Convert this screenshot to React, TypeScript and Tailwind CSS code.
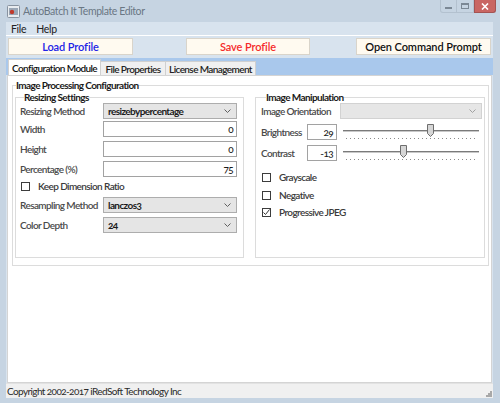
import React from 'react';
import clsx from 'clsx';

const ComboBox = ({
  value,
  width,
  disabled,
}: {
  value?: string;
  width: string;
  disabled?: boolean;
}) => (
  <div
    className={clsx(
      'h-[16px] border flex items-center justify-between pl-[4px] pr-[5px] font-bold text-[#1a1a1a]',
      disabled ? 'bg-[#e6e6e6] border-[#d2d2d2]' : 'bg-[#e5e5e5] border-[#adadad]',
      width
    )}
  >
    <span>{value}</span>
    <svg width="7" height="4" viewBox="0 0 7 4">
      <path
        d="M0.5 0.5 L3.5 3.5 L6.5 0.5"
        fill="none"
        stroke={disabled ? '#a0a0a0' : '#606060'}
        strokeWidth="1"
      />
    </svg>
  </div>
);

const TextBox = ({ value, width }: { value: string; width: string }) => (
  <div
    className={clsx(
      'h-[16px] bg-white border border-[#a2a2a2] flex items-center justify-end pr-[3px] font-medium text-[#1a1a1a]',
      width
    )}
  >
    {value}
  </div>
);

const CheckBox = ({ label, checked }: { label: string; checked?: boolean }) => (
  <div className="h-[10px] flex items-center">
    <span className="w-[9px] h-[9px] border border-[#3c3c3c] bg-white flex items-center justify-center">
      {checked && (
        <svg width="7" height="7" viewBox="0 0 7 7">
          <path d="M0.5 3.5 L2.5 5.5 L6.5 0.5" fill="none" stroke="#333" strokeWidth="1" />
        </svg>
      )}
    </span>
    <span className="ml-[8px] font-semibold text-[#3a3a3a]">{label}</span>
  </div>
);

// value from -100 to 100
const TrackBar = ({ value }: { value: number }) => {
  const pos = (value + 100) / 200;
  return (
    <div className="relative w-[136px] h-[16px] ml-[6px]">
      <div className="mt-[6px] h-[2px] bg-[#7a7a7a] border-b border-[#c8c8c8]" />
      <div className="mt-[6px] mx-[3px] h-px bg-[repeating-linear-gradient(90deg,#8a8a8a_0_1px,transparent_1px_4px)]" />
      <svg
        width="7"
        height="13"
        viewBox="0 0 7 13"
        className="absolute top-0"
        style={{ left: `${pos * 130}px` }}
      >
        <path d="M0.5 0.5 H6.5 V9.5 L3.5 12.5 L0.5 9.5 Z" fill="#d6d6d6" stroke="#6e6e6e" strokeWidth="1" />
      </svg>
    </div>
  );
};

const Label = ({ text, width }: { text: string; width: string }) => (
  <span className={clsx('font-semibold text-[#4a4a4a]', width)}>{text}</span>
);

export default function App() {
  return (
    <div className="w-[500px] h-[403px] bg-[#c6d4e2] flex flex-col font-['Lato',sans-serif] text-[10px] leading-[12px] tracking-[-0.6px] whitespace-nowrap oldstyle-nums text-[#222] overflow-hidden">
      {/* title bar */}
      <div className="h-[22px] flex items-start">
        <svg width="13" height="13" viewBox="0 0 13 13" className="ml-[7px] mt-[5px]">
          <rect x="0.5" y="0.5" width="12" height="12" rx="1" fill="#e8ecf0" stroke="#8893a0" />
          <rect x="2" y="3" width="9" height="7" fill="#9aa7b6" />
          <circle cx="5" cy="7" r="2.2" fill="#c0392b" />
        </svg>
        <span className="ml-[3px] mt-[5px] text-[10.5px] tracking-[-0.4px] text-[#6a7784]">
          AutoBatch It Template Editor
        </span>
        <div className="ml-auto flex items-start mr-[4px]">
          <div className="w-[17px] h-[13px] border border-t-0 border-[#b3c1cf] rounded-bl-[3px] flex items-end justify-center pb-[3px]">
            <span className="w-[7px] h-[2px] bg-[#7b8895]" />
          </div>
          <div className="w-[17px] h-[13px] border border-t-0 border-l-0 border-[#b3c1cf] flex items-center justify-center">
            <span className="w-[8px] h-[6px] border border-t-2 border-[#7b8895]" />
          </div>
          <div className="w-[22px] h-[13px] bg-[#c96663] border border-t-0 border-[#a45352] rounded-br-[3px] flex items-center justify-center">
            <svg width="8" height="7" viewBox="0 0 8 7">
              <path d="M1 0.5 L7 6.5 M7 0.5 L1 6.5" stroke="#fff" strokeWidth="1.6" />
            </svg>
          </div>
        </div>
      </div>

      {/* client area */}
      <div className="flex-1 ml-[6px] mr-[7px] mb-[5px] flex flex-col bg-[#d8e3ee]">
        {/* menu */}
        <div className="h-[13px] flex items-center pl-[5px] gap-[10px] text-[10.5px] tracking-[-0.3px] text-[#222]">
          <span>File</span>
          <span>Help</span>
        </div>
        <div className="h-px bg-white" />

        {/* buttons */}
        <div className="h-[22px] flex items-start pt-[2px] pl-[2px] pr-[2px] text-[11px] leading-[14px] font-semibold tracking-[-0.1px]">
          <button className="w-[125px] h-[17px] bg-[#fffaf0] border border-[#d9d4ca] text-[#2323e6]">
            Load Profile
          </button>
          <button className="ml-[53px] w-[124px] h-[17px] bg-[#fffaf0] border border-[#d9d4ca] text-[#f52a2a]">
            Save Profile
          </button>
          <button className="ml-auto w-[135px] h-[17px] bg-[#fffaf0] border border-[#d9d4ca] text-[#111]">
            Open Command Prompt
          </button>
        </div>

        {/* tabs */}
        <div className="h-[17px] bg-[#a9c8ec] flex items-end pl-[2px]">
          <div className="h-[16px] w-[93px] bg-white border border-b-0 border-[#d0d0d0] flex items-center pl-[3px] font-semibold text-[#111]">
            Configuration Module
          </div>
          <div className="h-[14px] w-[65px] bg-[#f0f0f0] border border-l-0 border-b-0 border-[#d0d0d0] flex items-center justify-center font-semibold text-[#222]">
            File Properties
          </div>
          <div className="h-[14px] w-[90px] bg-[#f0f0f0] border border-l-0 border-b-0 border-[#d0d0d0] flex items-center justify-center font-semibold text-[#222]">
            License Management
          </div>
        </div>

        {/* tab page */}
        <div className="flex-1 mx-px bg-white border border-[#d4d4d4] flex flex-col">
          <fieldset className="mt-[3px] ml-[4px] w-[477px] h-[187px] border border-[#dcdcdc] pl-[2px]">
            <legend className="ml-px font-bold text-[#1a1a1a]">Image Processing Configuration</legend>
            <div className="flex gap-[11px]">
              {/* resizing */}
              <fieldset className="w-[229px] h-[167px] border border-[#dcdcdc] pl-[4px]">
                <legend className="ml-[4px] font-bold text-[#1a1a1a]">Resizing Settings</legend>
                <div className="flex items-center h-[16px]">
                  <Label text="Resizing Method" width="w-[83px]" />
                  <ComboBox value="resizebypercentage" width="w-[134px]" />
                </div>
                <div className="flex items-center h-[16px] mt-[2px]">
                  <Label text="Width" width="w-[83px]" />
                  <TextBox value="0" width="w-[134px]" />
                </div>
                <div className="flex items-center h-[16px] mt-[4px]">
                  <Label text="Height" width="w-[83px]" />
                  <TextBox value="0" width="w-[134px]" />
                </div>
                <div className="flex items-center h-[16px] mt-[4px]">
                  <Label text="Percentage (%)" width="w-[83px]" />
                  <TextBox value="75" width="w-[134px]" />
                </div>
                <div className="mt-[4px] ml-px">
                  <CheckBox label="Keep Dimension Ratio" />
                </div>
                <div className="flex items-center h-[16px] mt-[6px]">
                  <Label text="Resampling Method" width="w-[83px]" />
                  <ComboBox value="lanczos3" width="w-[134px]" />
                </div>
                <div className="flex items-center h-[16px] mt-[4px]">
                  <Label text="Color Depth" width="w-[83px]" />
                  <ComboBox value="24" width="w-[134px]" />
                </div>
              </fieldset>

              {/* manipulation */}
              <fieldset className="w-[230px] h-[167px] border border-[#dcdcdc] pl-[5px]">
                <legend className="ml-[5px] font-bold text-[#1a1a1a]">Image Manipulation</legend>
                <div className="flex items-center h-[16px]">
                  <Label text="Image Orientation" width="w-[79px]" />
                  <ComboBox width="w-[142px]" disabled />
                </div>
                <div className="flex items-start h-[16px] mt-[5px]">
                  <Label text="Brightness" width="w-[46px] mt-[2px]" />
                  <TextBox value="29" width="w-[30px]" />
                  <TrackBar value={29} />
                </div>
                <div className="flex items-start h-[16px] mt-[5px]">
                  <Label text="Contrast" width="w-[46px] mt-[2px]" />
                  <TextBox value="-13" width="w-[30px]" />
                  <TrackBar value={-13} />
                </div>
                <div className="mt-[11px] ml-px">
                  <CheckBox label="Grayscale" />
                </div>
                <div className="mt-[8px] ml-px">
                  <CheckBox label="Negative" />
                </div>
                <div className="mt-[7px] ml-px">
                  <CheckBox label="Progressive JPEG" checked />
                </div>
              </fieldset>
            </div>
          </fieldset>
        </div>

        {/* status bar */}
        <div className="h-[15px] bg-[#f0f0f0] border-t border-[#e2e2e2] flex items-center pl-px text-[#2a2a2a]">
          <span>Copyright 2002-2017 iRedSoft Technology Inc</span>
          <svg width="6" height="6" viewBox="0 0 6 6" className="ml-auto mr-px mt-[6px]">
            <rect x="4" y="0" width="2" height="2" fill="#a8a8a8" />
            <rect x="2" y="2" width="2" height="2" fill="#a8a8a8" />
            <rect x="4" y="2" width="2" height="2" fill="#a8a8a8" />
            <rect x="0" y="4" width="2" height="2" fill="#a8a8a8" />
            <rect x="2" y="4" width="2" height="2" fill="#a8a8a8" />
            <rect x="4" y="4" width="2" height="2" fill="#a8a8a8" />
          </svg>
        </div>
      </div>
    </div>
  );
}
